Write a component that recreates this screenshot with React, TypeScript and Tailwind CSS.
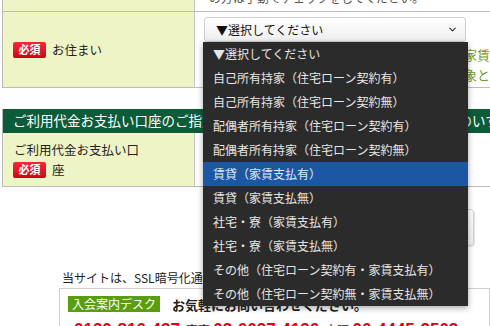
import { ChevronDown } from "lucide-react";

const options = [
  "▼選択してください",
  "自己所有持家（住宅ローン契約有）",
  "自己所有持家（住宅ローン契約無）",
  "配偶者所有持家（住宅ローン契約有）",
  "配偶者所有持家（住宅ローン契約無）",
  "賃貸（家賃支払有）",
  "賃貸（家賃支払無）",
  "社宅・寮（家賃支払有）",
  "社宅・寮（家賃支払無）",
  "その他（住宅ローン契約有・家賃支払有）",
  "その他（住宅ローン契約無・家賃支払無）",
];

function Badge() {
  return (
    <span className="inline-flex h-[16px] w-[33px] shrink-0 items-center justify-center rounded-[2px] bg-gradient-to-b from-[#f2293b] to-[#cf0010] text-[11px] font-bold leading-none text-white">
      必須
    </span>
  );
}

export default function App() {
  return (
    <div className="relative h-[326px] w-[490px] overflow-hidden bg-white font-['Noto_Sans_CJK_JP','Noto_Sans',sans-serif] text-[#222]">
      {/* table 1 */}
      <div className="ml-[2px] border-l border-[#b8b8b8]">
        <div className="flex h-[12px] border-b border-[#bdbdbd]">
          <div className="w-[192px] border-r border-[#c6c6c6] bg-[#eef4c5]" />
          <div className="flex-1 overflow-hidden pl-[14px]">
            <div className="-mt-[10px] whitespace-nowrap text-[12px] leading-[16px] text-[#555]">
              の方は手動でチェックをしてください。
            </div>
          </div>
        </div>
        <div className="flex h-[76px] border-b border-[#bdbdbd]">
          <div className="flex w-[192px] items-center gap-[6px] border-r border-[#c6c6c6] bg-[#eef4c5] pl-[10px]">
            <Badge />
            <span className="text-[12.5px] leading-[16px]">お住まい</span>
          </div>
          <div className="flex-1 overflow-hidden pl-[9px] pt-[5px]">
            <div className="flex h-[25px] w-[262px] items-center justify-between rounded-[3px] border border-[#cfcfcf] bg-gradient-to-b from-white to-[#eeeeee] pl-[11px] pr-[7px] text-[12px] leading-none text-[#111]">
              <span>▼選択してください</span>
              <ChevronDown size={11} strokeWidth={2.5} className="text-[#333]" />
            </div>
            <div className="mt-[3px] whitespace-nowrap text-[13px] leading-[20px] text-[#6b9b21]">
              <div>※お住まいが「賃貸」の方は、毎月お支払い家賃支払額をご入力ください。</div>
              <div>※「社宅・寮」で家賃の支払がある場合も対象となります。</div>
            </div>
          </div>
        </div>
      </div>

      {/* table 2 */}
      <div className="ml-[2px] mt-[21px] border-l border-[#b8b8b8]">
        <div className="flex h-[24px] items-center overflow-hidden whitespace-nowrap bg-[#0c5c3a] pl-[10px] text-[13.5px] leading-none text-white">
          ご利用代金お支払い口座のご指定（銀行・信用金庫・ゆうちょ銀行・農協のいずれかをお選びください）
        </div>
        <div className="flex h-[54px] border-b border-[#bdbdbd]">
          <div className="flex w-[192px] flex-col justify-center border-r border-[#c6c6c6] bg-[#eef4c5] pl-[10px] text-[12.5px] leading-[20px]">
            <div className="pl-[1px]">ご利用代金お支払い口</div>
            <div className="flex items-center gap-[6px]">
              <Badge />
              <span>座</span>
            </div>
          </div>
          <div className="flex-1" />
        </div>
      </div>

      {/* button */}
      <div className="mt-[22px] flex justify-end pr-[16px]">
        <div className="h-[37px] w-[170px] rounded-[4px] border border-[#d2d2d2] bg-gradient-to-b from-white to-[#f1f1f1] shadow-[1px_1px_1px_rgba(0,0,0,0.12)]" />
      </div>

      <div className="mt-[24px] whitespace-nowrap pl-[62px] text-[12px] leading-[16px] text-[#222]">
        当サイトは、SSL暗号化通信により、お客様の情報を保護しています。
      </div>

      <div className="ml-[59px] mt-[2px] border border-[#cfcfcf] pl-[8px] pt-[7px]">
        <div className="flex items-center">
          <span className="inline-flex h-[16px] items-center bg-[#5a9e10] px-[4px] text-[12px] leading-none text-white">
            入会案内デスク
          </span>
          <span className="ml-[12px] whitespace-nowrap text-[13px] font-bold leading-none text-[#222]">
            お気軽にお問い合わせください。
          </span>
        </div>
        <div className="mt-[7px] flex items-baseline whitespace-nowrap pl-[6px] leading-[22px]">
          <span className="font-['Liberation_Sans',sans-serif] text-[17px] font-bold text-[#e00012]">0120-816-437</span>
          <span className="ml-[6px] text-[12px]">東京:</span>
          <span className="font-['Liberation_Sans',sans-serif] text-[17px] font-bold text-[#e00012]">03-6627-4136</span>
          <span className="ml-[6px] text-[12px]">大阪:</span>
          <span className="font-['Liberation_Sans',sans-serif] text-[17px] font-bold text-[#e00012]">06-4445-3503</span>
        </div>
      </div>

      {/* open select dropdown */}
      <div className="absolute left-[203px] top-[42px] w-[265px] bg-[#2b2b2b] shadow-[0_2px_6px_rgba(0,0,0,0.35)]">
        {options.map((o, i) => (
          <div
            key={o}
            className={
              i === 5
                ? "flex h-[24px] items-center whitespace-nowrap bg-[#1c57a4] pl-[10px] text-[12px] leading-none text-[#dfe9f8]"
                : "flex h-[24px] items-center whitespace-nowrap pl-[10px] text-[12px] leading-none text-[#e6e6e6]"
            }
          >
            {o}
          </div>
        ))}
      </div>
    </div>
  );
}
